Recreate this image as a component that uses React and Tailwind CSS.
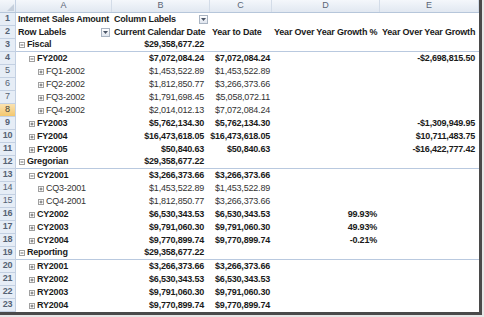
import React from "react";

const COLS = [96, 98, 62, 108, 99];

const rows = [
  { cells: ["Internet Sales Amount", "Column Labels"], bold: true, kind: "top" },
  { cells: ["Row Labels", "Current Calendar Date", "Year to Date", "Year Over Year Growth %", "Year Over Year Growth"], bold: true, kind: "head" },
  { label: "Fiscal", lvl: 0, icon: "minus", bold: true, vals: ["$29,358,677.22"], line: true },
  { label: "FY2002", lvl: 1, icon: "minus", bold: true, vals: ["$7,072,084.24", "$7,072,084.24", "", "-$2,698,815.50"] },
  { label: "FQ1-2002", lvl: 2, icon: "plus", vals: ["$1,453,522.89", "$1,453,522.89"] },
  { label: "FQ2-2002", lvl: 2, icon: "plus", vals: ["$1,812,850.77", "$3,266,373.66"] },
  { label: "FQ3-2002", lvl: 2, icon: "plus", vals: ["$1,791,698.45", "$5,058,072.11"] },
  { label: "FQ4-2002", lvl: 2, icon: "plus", vals: ["$2,014,012.13", "$7,072,084.24"] },
  { label: "FY2003", lvl: 1, icon: "plus", bold: true, vals: ["$5,762,134.30", "$5,762,134.30", "", "-$1,309,949.95"] },
  { label: "FY2004", lvl: 1, icon: "plus", bold: true, vals: ["$16,473,618.05", "$16,473,618.05", "", "$10,711,483.75"] },
  { label: "FY2005", lvl: 1, icon: "plus", bold: true, vals: ["$50,840.63", "$50,840.63", "", "-$16,422,777.42"] },
  { label: "Gregorian", lvl: 0, icon: "minus", bold: true, vals: ["$29,358,677.22"], line: true },
  { label: "CY2001", lvl: 1, icon: "minus", bold: true, vals: ["$3,266,373.66", "$3,266,373.66"] },
  { label: "CQ3-2001", lvl: 2, icon: "plus", vals: ["$1,453,522.89", "$1,453,522.89"] },
  { label: "CQ4-2001", lvl: 2, icon: "plus", vals: ["$1,812,850.77", "$3,266,373.66"] },
  { label: "CY2002", lvl: 1, icon: "plus", bold: true, vals: ["$6,530,343.53", "$6,530,343.53", "99.93%"] },
  { label: "CY2003", lvl: 1, icon: "plus", bold: true, vals: ["$9,791,060.30", "$9,791,060.30", "49.93%"] },
  { label: "CY2004", lvl: 1, icon: "plus", bold: true, vals: ["$9,770,899.74", "$9,770,899.74", "-0.21%"] },
  { label: "Reporting", lvl: 0, icon: "minus", bold: true, vals: ["$29,358,677.22"], line: true },
  { label: "RY2001", lvl: 1, icon: "plus", bold: true, vals: ["$3,266,373.66", "$3,266,373.66"] },
  { label: "RY2002", lvl: 1, icon: "plus", bold: true, vals: ["$6,530,343.53", "$6,530,343.53"] },
  { label: "RY2003", lvl: 1, icon: "plus", bold: true, vals: ["$9,791,060.30", "$9,791,060.30"] },
  { label: "RY2004", lvl: 1, icon: "plus", bold: true, vals: ["$9,770,899.74", "$9,770,899.74"] },
];

const indents = ["pl-[3px]", "pl-[13px]", "pl-[22px]"];

function Toggle({ type }) {
  return (
    <svg width="6" height="6" viewBox="0 0 6 6" className="mr-[2px] shrink-0">
      <rect x="0.5" y="0.5" width="5" height="5" fill="#fff" stroke="#a0a0a0" />
      <line x1="1.5" y1="3" x2="4.5" y2="3" stroke="#6a6a6a" />
      {type === "plus" && <line x1="3" y1="1.5" x2="3" y2="4.5" stroke="#6a6a6a" />}
    </svg>
  );
}

function Dropdown() {
  return (
    <span className="ml-auto mr-[2px] flex h-[9px] w-[9px] items-center justify-center border border-[#a9b4c2] bg-gradient-to-b from-white to-[#dfe5ee]">
      <svg width="5" height="3" viewBox="0 0 5 3">
        <path d="M0 0h5L2.5 3z" fill="#4a5566" />
      </svg>
    </span>
  );
}

function RowNum({ n }) {
  const sel = n === 8;
  return (
    <div
      className={`flex w-[16px] shrink-0 items-center justify-center border-b border-r border-[#c3d0e2] text-[9px] ${
        sel ? "bg-gradient-to-b from-[#fae2b0] to-[#f3c76d] text-[#3b3b3b]" : "bg-[#e6edf6] text-[#556274]"
      }`}
    >
      {n}
    </div>
  );
}

export default function App() {
  return (
    <div className="h-[317px] w-[484px] overflow-hidden bg-[#e6e6e6]" style={{ fontFamily: '"Liberation Sans", Arial, sans-serif' }}>
      <div className="h-[315px] w-[482px] border-b-[3px] border-r-[3px] border-[#4a4a4a] bg-white">
        {/* column letters */}
        <div className="flex h-[13px] border-b border-[#b6c6da] bg-gradient-to-b from-[#f4f7fb] to-[#e1e8f1] text-[9px] text-[#5a6576]">
          <div className="relative w-[16px] shrink-0 border-r border-[#c3d0e2]">
            <svg width="7" height="7" viewBox="0 0 7 7" className="absolute bottom-[1px] right-[1px]">
              <path d="M7 0v7H0z" fill="#c5cfdc" />
            </svg>
          </div>
          {["A", "B", "C", "D", "E"].map((c, i) => (
            <div
              key={c}
              style={{ width: COLS[i] }}
              className="flex shrink-0 items-center justify-center border-r border-[#d3dce8]"
            >
              {c}
            </div>
          ))}
        </div>

        {rows.map((r, idx) => {
          const n = idx + 1;
          if (r.kind === "top") {
            return (
              <div key={n} className="flex h-[13px] text-[9px] font-bold tracking-[-0.2px] text-[#1a1a1a]">
                <RowNum n={n} />
                <div className="flex w-[96px] shrink-0 items-center pl-[2px]">{r.cells[0]}</div>
                <div className="flex w-[98px] shrink-0 items-center pl-[2px]">
                  {r.cells[1]}
                  <Dropdown />
                </div>
              </div>
            );
          }
          if (r.kind === "head") {
            return (
              <div key={n} className="flex h-[13px] text-[9px] font-bold tracking-[-0.2px] text-[#1a1a1a]">
                <RowNum n={n} />
                <div className="flex w-[96px] shrink-0 items-center pl-[2px]">
                  {r.cells[0]}
                  <Dropdown />
                </div>
                {r.cells.slice(1).map((t, i) => (
                  <div key={i} style={{ width: COLS[i + 1] }} className="flex shrink-0 items-center overflow-hidden whitespace-nowrap pl-[2px]">
                    {t}
                  </div>
                ))}
              </div>
            );
          }
          const vals = [...r.vals, "", "", "", ""].slice(0, 4);
          return (
            <div
              key={n}
              className={`flex h-[13px] text-[9px] tracking-[-0.2px] ${r.bold ? "font-bold text-[#1a1a1a]" : "text-[#333]"}`}
            >
              <RowNum n={n} />
              <div className={`flex flex-1 ${r.line ? "border-b border-[#b9c9df]" : ""}`}>
                <div className={`flex w-[96px] shrink-0 items-center ${indents[r.lvl]}`}>
                  <Toggle type={r.icon} />
                  <span>{r.label}</span>
                </div>
                <div className="flex w-[98px] shrink-0 items-center justify-end pr-[6px]">{vals[0]}</div>
                <div className="flex w-[62px] shrink-0 items-center justify-end whitespace-nowrap pr-[2px]">{vals[1]}</div>
                <div className="flex w-[108px] shrink-0 items-center justify-end pr-[3px]">{vals[2]}</div>
                <div className="flex w-[99px] shrink-0 items-center justify-end pr-[4px]">{vals[3]}</div>
              </div>
            </div>
          );
        })}
      </div>
    </div>
  );
}
